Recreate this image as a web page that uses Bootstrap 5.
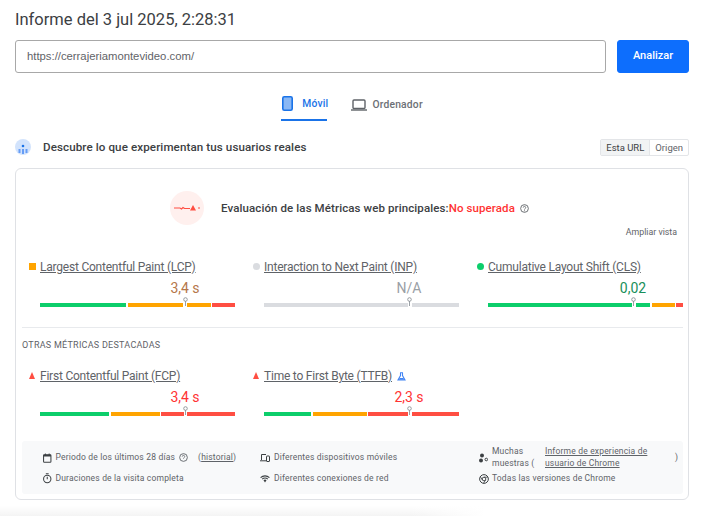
<!DOCTYPE html>
<html lang="es">
<head>
<meta charset="utf-8">
<title>Informe</title>
<link rel="stylesheet" href="https://cdn.jsdelivr.net/npm/bootstrap@5.3.0/dist/css/bootstrap.min.css">
<style>
html,body{height:516px;overflow:hidden;background:#fff}
body{font-family:Roboto,"Liberation Sans",sans-serif;color:#3c4043;padding:0 31px 0 15px}
.ttl{font-size:16.5px;font-weight:400;line-height:24px;margin:8px 0 8px;color:#3c4043}
.urlbox{flex:1;height:33px;border:1px solid #a8a8a8;border-radius:3px;font-family:"Liberation Sans",sans-serif;font-size:11.3px;color:#5f6368;padding:0 11px;line-height:31px}
.gobtn{width:72px;height:33px;padding:0;font-size:11px;font-weight:500;border-radius:3px;margin-left:11px;background:#0d6efd;border-color:#0d6efd}
.tabsbar{height:47px;margin-top:8px;gap:23px;padding-left:1px;font-size:10.3px;font-weight:500;letter-spacing:.2px}
.tb{display:flex;align-items:center;gap:5px;height:33px;margin-top:7px;color:#6c7075;padding:0 1px}
.tb.on{color:#1a73e8;border-bottom:2px solid #1a73e8;gap:9px}
.tb.on span{margin-right:-2px}
.fieldrow{height:38px}
.fieldrow h2{font-size:11.6px;font-weight:500;margin:1px 0 0 12px;color:#3c4043;letter-spacing:.1px}
.orb{width:16px;height:16px;display:block}
.seg{font-size:9.5px;border:1px solid #e3e5e8;border-radius:2px;color:#5f6368;display:flex;height:17px;line-height:15px;margin-left:auto}
.seg span{padding:0 5px}.seg span:first-child{background:#f1f3f4;color:#3c4043;border-right:1px solid #e3e5e8}
.mainbox{border:1px solid #dfe1e5;border-radius:6px;height:332px;padding:0 5px 5px 6px;margin-top:2px}
.verdict{height:36px;margin-top:21px;padding-left:148px;gap:17px;font-size:11.5px;font-weight:500;color:#3c4043;letter-spacing:.1px}
.vtext{margin-top:1px}
.vc{width:34px;height:34px;border-radius:50%;background:#fff0ee;display:flex;align-items:center;justify-content:center}
.failtxt{color:#f33;font-weight:500}
.vhelp{margin-left:5px}
.zoomlink{font-size:8.8px;color:#5f6368;text-align:right;padding-right:6px;line-height:12px}
.mgrid{display:grid;grid-template-columns:repeat(3,224px);padding-left:18px}
.mgrid-a{margin-top:22px}
.mitem{position:relative;width:195px;height:47px}
.mhead{display:flex;align-items:center;gap:5px;height:14px}
.mname{font-size:12px;letter-spacing:-.22px;line-height:14px;color:#5f6368;text-decoration:underline;white-space:nowrap;display:block}
.mval{font-size:14px;line-height:16px;position:absolute;top:20px;transform:translateX(-50%);white-space:nowrap;left:145px}
.bar{position:absolute;left:0;right:0;top:43px;height:4px;display:flex;gap:1.5px}
.bar i{display:block;height:4px}
.gg{background:#0cce6b}.oo{background:#ffa400}.rr{background:#ff4e42}.nn{background:#dadce0}
.pin{position:absolute;top:37px;left:142.5px;width:5px;height:9px}
.stat{position:absolute;left:-11px;top:3px;width:7px;height:7px;display:block}
.sq{background:#ffa400}.dg{background:#dadce0;border-radius:50%}.dgr{background:#0cce6b;border-radius:50%}
.tri{width:0;height:0;border-left:3.5px solid transparent;border-right:3.5px solid transparent;border-bottom:7px solid #ff4e42}
.sep{border-top:1px solid #e8eaed;margin-top:20px;height:0}
.others{font-size:9px;color:#5f6368;letter-spacing:.25px;line-height:12px;margin:11px 0 18px}
.foot{background:#f8f9fa;height:53px;border-radius:3px;margin-top:25px;font-size:8.5px;color:#5f6368;letter-spacing:.18px;display:grid;grid-template-columns:217px 219px 1fr;grid-template-rows:21px 21px;padding:6px 0 0 21px}
.fi{display:flex;align-items:center;gap:4px;white-space:nowrap}
.fi svg{flex:none}
.fh{margin-right:2px}
.gap3{gap:3px}
.wrapcell{white-space:normal;line-height:11.3px;gap:0}
.wrapcell svg{margin-right:4px}
.mm{width:53px;flex:none}.ll{width:130px;flex:none}
.fadebar{height:10px;width:485px;margin:6px 0 0 -15px;background:linear-gradient(#fff,rgba(255,255,255,0)),linear-gradient(to right,#f4f4f4 85%,#fff)}
</style>
</head>
<body>
<h1 class="ttl">Informe del 3 jul 2025, 2:28:31</h1>
<div class="d-flex">
  <div class="urlbox">https://cerrajeriamontevideo.com/</div>
  <button class="btn btn-primary gobtn">Analizar</button>
</div>
<div class="tabsbar d-flex justify-content-center">
  <div class="tb on"><svg width="11" height="15" viewBox="0 0 11 15"><rect x=".8" y=".8" width="9.400" height="13.400" rx="1.500" fill="#8ab8f5" stroke="#1a73e8" stroke-width="1.600"/></svg><span>Móvil</span></div>
  <div class="tb"><svg width="16" height="12" viewBox="0 0 16 12"><rect x="2" y="1" width="12" height="8.500" rx="1" fill="none" stroke="#5f6368" stroke-width="1.400"/><path d="M0 11h16" stroke="#5f6368" stroke-width="1.400"/></svg><span>Ordenador</span></div>
</div>
<div class="fieldrow d-flex align-items-center">
  <svg class="orb" viewBox="0 0 16 16"><circle cx="8" cy="8" r="8" fill="#d2e3fc"/><circle cx="8" cy="7" r="1.300" fill="#1a73e8"/><path d="M3.500 10h2v4h-2zM7 10h2v5H7zM10.500 10h2v4h-2z" fill="#669df6"/></svg>
  <h2>Descubre lo que experimentan tus usuarios reales</h2>
  <div class="seg"><span>Esta URL</span><span>Origen</span></div>
</div>
<section class="mainbox">
  <div class="verdict d-flex align-items-center">
    <div class="vc"><svg width="26" height="8" viewBox="0 0 26 8"><path d="M0 4h6l1.500 1 1.500-1.500 1.500 1H16" fill="none" stroke="#ff4e42" stroke-width="1.200"/><path d="M19 1l3 5.500h-6z" fill="#ff4e42"/><path d="M24 4h2" stroke="#ff4e42" stroke-width="1.200"/></svg></div>
    <div class="d-flex align-items-center vtext">Evaluación de las Métricas web principales:<span class="failtxt">No superada</span>
    <svg class="vhelp" width="9" height="9" viewBox="0 0 10 10"><circle cx="5" cy="5" r="4.300" fill="none" stroke="#5f6368"/><path d="M3.600 4a1.400 1.400 0 1 1 2.100 1.200c-.5.300-.7.500-.7 1" fill="none" stroke="#5f6368" stroke-width=".9"/><circle cx="5" cy="7.500" r=".6" fill="#5f6368"/></svg></div>
  </div>
  <div class="zoomlink">Ampliar vista</div>
  <div class="mgrid mgrid-a">
    <div class="mitem"><i class="stat sq"></i><span class="mname">Largest Contentful Paint (LCP)</span><span class="mval" style="color:#b5774a">3,4 s</span>
      <div class="bar"><i class="gg" style="width:86px"></i><i class="oo" style="width:55.500px"></i><i class="oo" style="width:23.500px;margin-left:2.500px"></i><i class="rr" style="width:23px"></i></div>
      <svg class="pin" viewBox="0 0 5 9"><path d="M2.500 4v5" stroke="#9aa0a6"/><circle cx="2.500" cy="2.500" r="1.800" fill="#fff" stroke="#80868b" stroke-width=".8"/></svg></div>
    <div class="mitem"><i class="stat dg"></i><span class="mname">Interaction to Next Paint (INP)</span><span class="mval" style="color:#9aa0a6">N/A</span>
      <div class="bar"><i class="nn" style="width:144px"></i><i class="nn" style="width:47px;margin-left:2.500px"></i></div>
      <svg class="pin" viewBox="0 0 5 9"><path d="M2.500 4v5" stroke="#9aa0a6"/><circle cx="2.500" cy="2.500" r="1.800" fill="#fff" stroke="#80868b" stroke-width=".8"/></svg></div>
    <div class="mitem"><i class="stat dgr"></i><span class="mname">Cumulative Layout Shift (CLS)</span><span class="mval" style="color:#188f5a">0,02</span>
      <div class="bar"><i class="gg" style="width:144px"></i><i class="gg" style="width:14px;margin-left:2.500px"></i><i class="oo" style="width:23px"></i><i class="rr" style="width:6.500px"></i></div>
      <svg class="pin" viewBox="0 0 5 9"><path d="M2.500 4v5" stroke="#9aa0a6"/><circle cx="2.500" cy="2.500" r="1.800" fill="#fff" stroke="#80868b" stroke-width=".8"/></svg></div>
  </div>
  <div class="sep"></div>
  <div class="others">OTRAS MÉTRICAS DESTACADAS</div>
  <div class="mgrid">
    <div class="mitem"><i class="stat tri"></i><span class="mname">First Contentful Paint (FCP)</span><span class="mval" style="color:#f33">3,4 s</span>
      <div class="bar"><i class="gg" style="width:69px"></i><i class="oo" style="width:49px"></i><i class="rr" style="width:23px"></i><i class="rr" style="width:48px;margin-left:1.500px"></i></div>
      <svg class="pin" viewBox="0 0 5 9"><path d="M2.500 4v5" stroke="#9aa0a6"/><circle cx="2.500" cy="2.500" r="1.800" fill="#fff" stroke="#80868b" stroke-width=".8"/></svg></div>
    <div class="mitem"><i class="stat tri"></i><div class="mhead"><span class="mname">Time to First Byte (TTFB)</span>
      <svg width="9" height="9" viewBox="0 0 9 9"><path d="M3 .7h3M3.500 1v2.500L1 8h7L5.500 3.500V1" fill="none" stroke="#4285f4" stroke-width="1.100"/><path d="M2.600 6h3.800l.9 1.800H1.700z" fill="#4285f4"/></svg></div><span class="mval" style="color:#f33">2,3 s</span>
      <div class="bar"><i class="gg" style="width:47px"></i><i class="oo" style="width:54px"></i><i class="rr" style="width:40px"></i><i class="rr" style="width:47px;margin-left:2.500px"></i></div>
      <svg class="pin" viewBox="0 0 5 9"><path d="M2.500 4v5" stroke="#9aa0a6"/><circle cx="2.500" cy="2.500" r="1.800" fill="#fff" stroke="#80868b" stroke-width=".8"/></svg></div>
  </div>
  <div class="foot">
    <div class="fi"><svg width="8.500" height="10" viewBox="0 0 9 10"><rect x=".6" y="1.500" width="7.800" height="8" rx=".8" fill="none" stroke="#3c4043" stroke-width="1.100"/><path d="M.6 1.500h7.800v2H.6zM2 .2h1v1.500H2zM6 .2h1v1.500H6z" fill="#3c4043"/></svg><span>Periodo de los últimos 28 días</span>
      <svg width="9" height="9" viewBox="0 0 10 10"><circle cx="5" cy="5" r="4.300" fill="none" stroke="#5f6368"/><path d="M3.600 4a1.400 1.400 0 1 1 2.100 1.200c-.5.300-.7.500-.7 1" fill="none" stroke="#5f6368" stroke-width=".9"/></svg><span class="fh"></span><span>(<u>historial</u>)</span></div>
    <div class="fi"><svg width="10" height="8" viewBox="0 0 10 8"><path d="M1.500 6V.5H6M0 6.800h6" fill="none" stroke="#3c4043"/><rect x="6.500" y="2" width="3" height="5.500" rx=".5" fill="none" stroke="#3c4043"/></svg><span>Diferentes dispositivos móviles</span></div>
    <div class="fi wrapcell"><svg width="9" height="10" viewBox="0 0 9 10"><circle cx="3" cy="2.500" r="2" fill="#3c4043"/><circle cx="2" cy="7.500" r="2" fill="#3c4043"/><circle cx="7.300" cy="6.500" r="1.300" fill="none" stroke="#3c4043"/></svg><span class="mm">Muchas muestras (</span><span class="ll"><u>Informe de experiencia de usuario de Chrome</u></span><span>)</span></div>
    <div class="fi"><svg width="8.500" height="10.500" viewBox="0 0 9 11"><circle cx="4.500" cy="6.300" r="3.900" fill="none" stroke="#3c4043" stroke-width="1.100"/><path d="M4.500 3.800v2.700M3 .7h3" stroke="#3c4043" stroke-width="1.100"/></svg><span>Duraciones de la visita completa</span></div>
    <div class="fi"><svg width="10" height="8" viewBox="0 0 10 8"><path d="M.6 2.700a6.300 6.300 0 0 1 8.800 0M2.200 4.200a4 4 0 0 1 5.600 0" fill="none" stroke="#3c4043" stroke-width="1.100"/><path d="M3.500 5.300a2.200 2.200 0 0 1 3 0L5 7.500z" fill="#3c4043"/></svg><span>Diferentes conexiones de red</span></div>
    <div class="fi gap3"><svg width="10" height="10" viewBox="0 0 11 11"><circle cx="5.500" cy="5.500" r="4.800" fill="none" stroke="#3c4043" stroke-width="1.100"/><circle cx="5.500" cy="5.500" r="2" fill="none" stroke="#3c4043"/><path d="M5.500 3.500h4.300M3.700 6.500L1.500 3M7.200 6.500L5 10.200" stroke="#3c4043" stroke-width=".9"/></svg><span>Todas las versiones de Chrome</span></div>
  </div>
</section>
<div class="fadebar"></div>
</body>
</html>
